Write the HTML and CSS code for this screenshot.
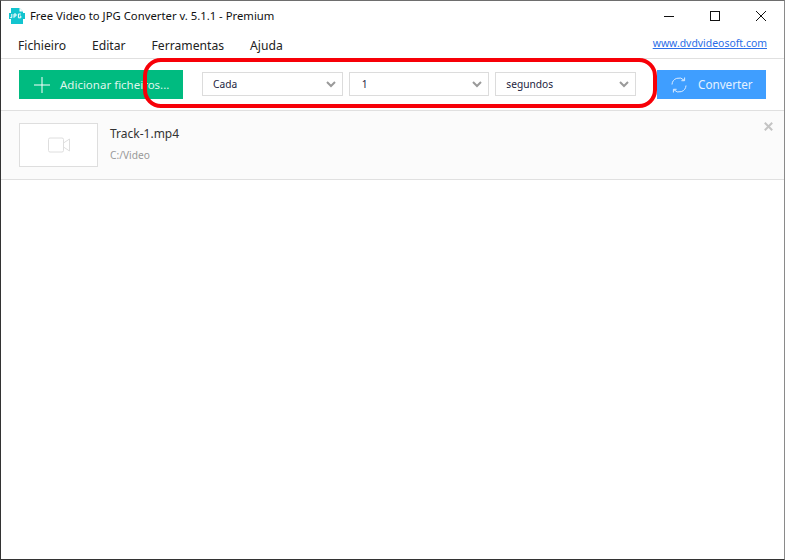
FILE: index.html
```html
<!DOCTYPE html>
<html lang="pt">
<head>
<meta charset="utf-8">
<title>Free Video to JPG Converter</title>
<link rel="stylesheet" href="styles.css">
</head>
<body>
<div class="window">
  <header class="titlebar">
    <svg class="app-icon" width="16" height="16" viewBox="0 0 16 16">
      <path d="M2 0h8.5L14 3.5V16H2z" fill="#12c4cf"/>
      <path d="M10.5 0L14 3.5h-3.5z" fill="#fff"/>
      <rect x="0" y="5" width="16" height="6" fill="#12c4cf"/>
      <path d="M2.8 6v3.6H1.2M5 9.8V6h2v2H5M11.8 6H9.4v3.8h2.4V8h-1" fill="none" stroke="#fff" stroke-width="1"/>
    </svg>
    <span class="title">Free Video to JPG Converter v. 5.1.1 - Premium</span>
    <div class="controls">
      <svg width="12" height="12" viewBox="0 0 12 12"><path d="M1 6.5h10" stroke="#111" fill="none"/></svg>
      <svg width="12" height="12" viewBox="0 0 12 12"><rect x="1.5" y="1.5" width="9" height="9" stroke="#111" fill="none"/></svg>
      <svg width="12" height="12" viewBox="0 0 12 12"><path d="M1 1l10 10M11 1L1 11" stroke="#111" fill="none"/></svg>
    </div>
  </header>
  <nav class="menubar">
    <span class="menu">Fichieiro</span>
    <span class="menu">Editar</span>
    <span class="menu">Ferramentas</span>
    <span class="menu">Ajuda</span>
    <a class="site" href="#">www.dvdvideosoft.com</a>
  </nav>
  <section class="toolbar">
    <button class="btn add">
      <svg width="16" height="16" viewBox="0 0 16 16"><path d="M8 0v16M0 8h16" stroke="#fff" fill="none"/></svg>
      <span>Adicionar ficheiros...</span>
    </button>
    <div class="selects">
      <div class="select">
        <span>Cada</span>
        <svg width="10" height="7" viewBox="0 0 10 7"><path d="M1 1l4 4 4-4" stroke="#9a9a9a" stroke-width="2" fill="none"/></svg>
      </div>
      <div class="select">
        <span class="num">1</span>
        <svg width="10" height="7" viewBox="0 0 10 7"><path d="M1 1l4 4 4-4" stroke="#9a9a9a" stroke-width="2" fill="none"/></svg>
      </div>
      <div class="select">
        <span>segundos</span>
        <svg width="10" height="7" viewBox="0 0 10 7"><path d="M1 1l4 4 4-4" stroke="#9a9a9a" stroke-width="2" fill="none"/></svg>
      </div>
    </div>
    <button class="btn convert">
      <svg width="16" height="16" viewBox="0 0 16 16" fill="none" stroke="#dcecff" stroke-width="1">
        <path d="M1 7.5A7 7 0 0 1 13.2 3.3"/>
        <path d="M13.6 0.5v3.2h-3.2"/>
        <path d="M15 8.5A7 7 0 0 1 2.8 12.7"/>
        <path d="M2.4 15.5v-3.2h3.2"/>
      </svg>
      <span class="convert-label">Converter</span>
    </button>
  </section>
  <section class="file-row">
    <div class="thumb">
      <svg width="22" height="16" viewBox="0 0 22 16" fill="none" stroke="#dedede" stroke-width="1">
        <rect x="0.5" y="1" width="15" height="14" rx="1.5"/>
        <path d="M15.5 6l6-4v12l-6-4"/>
      </svg>
    </div>
    <div class="file-info">
      <div class="file-name">Track-1.mp4</div>
      <div class="file-path">C:/Video</div>
    </div>
    <svg class="remove" width="9" height="9" viewBox="0 0 9 9"><path d="M.8.8l7.4 7.4M8.2.8L.8 8.2" stroke="#c4c4c4" stroke-width="2" fill="none"/></svg>
  </section>
  <div class="annotation"></div>
</div>
</body>
</html>
```
FILE: styles.css
```css
* { box-sizing: border-box; }
html, body { margin: 0; padding: 0; }
body {
  width: 785px;
  height: 560px;
  background: #fff;
  font-family: "Noto Sans", "Open Sans", sans-serif;
  overflow: hidden;
}
.window {
  position: relative;
  width: 785px;
  height: 560px;
  border-left: 1px solid #333;
  border-right: 1px solid #8a8a8a;
  border-bottom: 1px solid #333;
  border-top: 1px solid #6e6e6e;
  display: flex;
  flex-direction: column;
}
.titlebar {
  height: 29px;
  display: flex;
  align-items: center;
  padding-left: 8px;
  flex: none;
}
.app-icon { flex: none; }
.title {
  margin-left: 5px;
  font-size: 11.3px;
  color: #111;
  white-space: nowrap;
}
.controls {
  margin-left: auto;
  display: flex;
  gap: 34px;
  padding-right: 17px;
  align-items: center;
}
.menubar {
  height: 29px;
  display: flex;
  align-items: center;
  padding: 2px 17px 0;
  gap: 26px;
  border-bottom: 1px solid #e0e0e0;
  flex: none;
}
.menu { font-size: 12.15px; color: #222; }
.site {
  margin-left: auto;
  font-size: 10.45px;
  color: #2a6ee8;
  text-decoration: underline;
  margin-bottom: 5px;
}
.toolbar {
  height: 52px;
  display: flex;
  align-items: center;
  padding: 0 18px;
  border-bottom: 1px solid #e0e0e0;
  flex: none;
}
.btn {
  border: 0;
  height: 29px;
  display: flex;
  align-items: center;
  font-family: inherit;
  font-size: 11.5px;
  color: #dff5ec;
  padding: 0;
  flex: none;
}
.add {
  width: 164px;
  background: #00bb80;
  padding-left: 15px;
  gap: 10px;
}
.convert {
  width: 109px;
  margin-left: 21px;
  background: #3f9eff;
  padding-left: 14px;
  gap: 11px;
  font-size: 11.7px;
  color: #e4f1ff;
}
.convert-label { margin-bottom: 2px; }
.selects {
  display: grid;
  grid-template-columns: repeat(3, 1fr);
  width: 434px;
  gap: 6px;
  margin-left: 19px;
  margin-bottom: 1px;
}
.select {
  height: 24px;
  border: 1px solid #dcdcdc;
  display: flex;
  align-items: center;
  justify-content: space-between;
  padding: 0 6px 0 10px;
  font-size: 10.2px;
  color: #1c2340;
}
.num { margin-left: 2px; }
.file-row {
  position: relative;
  height: 69px;
  background: #fbfbfb;
  border-bottom: 1px solid #e0e0e0;
  display: flex;
  align-items: center;
  padding-left: 18px;
  flex: none;
}
.thumb {
  width: 79px;
  height: 44px;
  border: 1px solid #dedede;
  display: flex;
  align-items: center;
  justify-content: center;
  background: #fff;
}
.file-info { margin-left: 12px; }
.file-name { font-size: 12px; color: #333; line-height: 20px; }
.file-path { font-size: 10.2px; color: #999; line-height: 22px; }
.remove { position: absolute; right: 11px; top: 11px; }
.annotation {
  position: absolute;
  left: 142px;
  top: 57px;
  width: 514px;
  height: 50px;
  border: 4px solid #f70008;
  border-radius: 18px;
  pointer-events: none;
}
```
